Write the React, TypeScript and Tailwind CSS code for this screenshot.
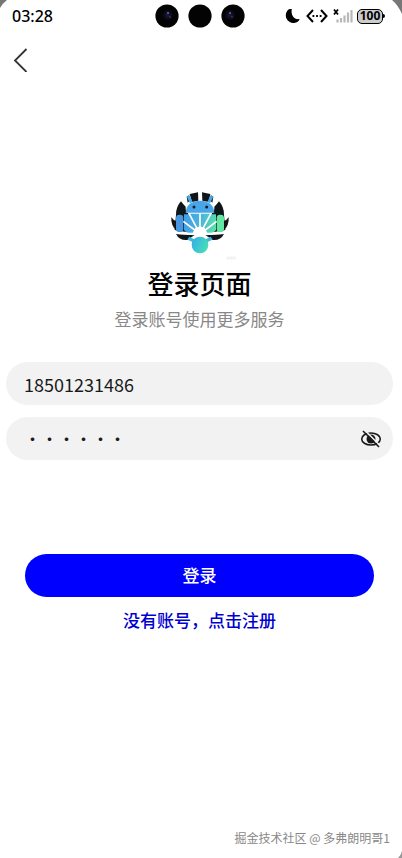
import { useState } from 'react';

function StatusBar() {
  return (
    <header className="relative flex h-8 items-center justify-between pr-[17px] pl-3">
      <span className="text-base font-medium text-black">03:28</span>
      <div className="absolute inset-x-0 top-1 flex justify-center gap-[9px] pr-0.5">
        <Camera lens="left" />
        <Camera />
        <Camera lens="right" />
      </div>
      <div className="flex items-center gap-1">
        <svg className="h-4 w-4" viewBox="0 0 16 16" aria-hidden="true">
          <path d="M4.500 1A7.300 7.300 0 1 0 14.600 11.200C8 13 3 7.500 4.500 1Z" fill="#000" />
          <path d="M4.500 1C1 3 0 7 1.500 10.500S7 15.500 10 14.800 14 12.500 14.600 11.200C10 12.200 5.500 8 6.800 1Z" fill="#000" />
        </svg>
        <svg className="h-4 w-6" viewBox="0 0 24 16" fill="none" stroke="#000" strokeWidth="2" aria-hidden="true">
          <path d="M8 2 2.500 8 8 14M16 2 21.500 8 16 14" />
          <path d="M7.500 8h1.800M11.100 8h1.800M14.700 8h1.800" strokeWidth="1.8" />
        </svg>
        <svg className="h-4 w-5" viewBox="0 0 20 16" aria-hidden="true">
          <path d="M1 1.500 5 6.500M5 1.500 1 6.500" stroke="#000" strokeWidth="1.8" />
          <path d="M4.500 11.500V14.500M8 10v4.500M11.500 7.500v7M15 4.500v10M18.500 2v12.500" stroke="#b8b8b8" strokeWidth="2.2" />
        </svg>
        <div className="flex items-center">
          <span className="flex h-[15px] w-[26px] items-center justify-center rounded-[5px] border border-black bg-[#ccc] text-xs font-bold text-black">
            100
          </span>
          <span className="h-1 w-0.5 rounded-r-full bg-black" />
        </div>
      </div>
    </header>
  );
}

function Camera({ lens }: { lens?: 'left' | 'right' }) {
  return (
    <svg className="h-6 w-6" viewBox="0 0 24 24" aria-hidden="true">
      <circle cx="12" cy="12" r="11.6" fill="#030303" />
      {lens && (
        <g transform={lens === 'left' ? 'translate(13 10)' : 'translate(9 10)'}>
          <circle cx="0" cy="1" r="5" fill="#0a0a18" />
          <circle cx="0" cy="1" r="2.6" fill="#15153a" />
          <circle cx="0" cy="-1" r="0.9" fill="#7777a5" />
          <circle cx="2" cy="3" r="0.8" fill="#4b4b68" />
        </g>
      )}
    </svg>
  );
}

function ScreenCorners() {
  return (
    <div className="pointer-events-none absolute inset-0 z-10 flex flex-col justify-between" aria-hidden="true">
      <div className="flex justify-between">
        <svg className="h-4 w-4" viewBox="0 0 16 16">
          <path d="M0 0h7Q3 3 0 8Z" fill="#777" />
        </svg>
        <svg className="h-4 w-4" viewBox="0 0 16 16">
          <path d="M6 0h10v14Q12 5 6 0Z" fill="#777" />
        </svg>
      </div>
      <svg className="h-2 w-2 self-end" viewBox="0 0 8 8">
        <path d="M8 1v7H4Q7 5 8 1Z" fill="#999" />
      </svg>
    </div>
  );
}

function Logo() {
  return (
    <svg className="h-[78px] w-[76px]" viewBox="20 30 228 234" role="img" aria-label="logo">
      <defs>
        <linearGradient id="robot" x1="80" y1="120" x2="188" y2="140" gradientUnits="userSpaceOnUse">
          <stop offset="0" stopColor="#3f9ce6" />
          <stop offset="0.5" stopColor="#4bb4dd" />
          <stop offset="1" stopColor="#5ce6a0" />
        </linearGradient>
        <linearGradient id="ball" x1="112" y1="185" x2="158" y2="205" gradientUnits="userSpaceOnUse">
          <stop offset="0" stopColor="#35b3e4" />
          <stop offset="1" stopColor="#48e0b4" />
        </linearGradient>
      </defs>
      <g fill="#10151a">
        <path d="M103 42 128 37 129 62 110 66ZM140 37 165 42 160 66 141 62Z" />
        <path d="M94 50 101 46 105 60 97 68ZM174 50 167 46 163 60 171 68Z" />
        <path d="M77 64Q62 80 62 104L58 150 92 156 98 104Q90 96 91 80Q84 74 77 64Z" />
        <path d="M191 64Q206 80 206 104L210 150 176 156 170 104Q178 96 177 80Q184 74 191 64Z" />
        <path d="M48 112Q46 138 64 152L64 124Q55 122 48 112ZM220 112Q222 138 204 152L204 124Q213 122 220 112Z" />
        <path d="M62 162 118 165 96 180Q72 182 62 162ZM206 162 150 165 172 180Q196 182 206 162Z" />
      </g>
      <path d="m98 48 10 20M170 48l-10 20" stroke="#48a9ea" strokeWidth="9" />
      <path d="M91 98Q93 64 134 62Q175 64 177 98Z" fill="#48a5e8" />
      <circle cx="116" cy="81" r="4.500" fill="#14202c" />
      <circle cx="154" cy="81" r="4.500" fill="#14202c" />
      <path d="M86 101H182V150Q174 164 134 164T86 150Z" fill="url(#robot)" />
      <path d="M86 101h12M170 101h12" stroke="#10151a" strokeWidth="4" />
      <rect x="62" y="104" width="22" height="52" rx="10" fill="#4796e0" />
      <rect x="184" y="104" width="22" height="52" rx="10" fill="#60e8a4" />
      <path
        d="M134 162V100M134 162 101 100M134 162 167 100M134 162 84 124M134 162 184 124"
        stroke="#fff"
        strokeWidth="5"
      />
      <path d="M60 157 112 158 120 144 134 139 148 144 156 158 208 157V162L150 166 134 174 118 166 60 162Z" fill="#fff" />
      <path d="m99 175 25 12M169 175l-25 12" stroke="#41b8dc" strokeWidth="10" />
      <circle cx="134" cy="195" r="25" fill="url(#ball)" />
      <path d="M215 231h6v6h-6ZM224 231h6v6h-6ZM233 231h7v6h-7Z" fill="none" stroke="#e8e8e8" strokeWidth="2" />
    </svg>
  );
}

function EyeIcon({ off }: { off: boolean }) {
  return (
    <svg className="h-5 w-6" viewBox="0 0 24 20" fill="none" stroke="#1a1a1a" strokeWidth="1.6" aria-hidden="true">
      <ellipse cx="12" cy="10" rx="9.300" ry="6" />
      <circle cx="12" cy="10" r="4.500" fill="#1a1a1a" stroke="none" />
      {off && (
        <>
          <path d="m5.500 1 16 16" stroke="#f2f2f2" strokeWidth="1.6" />
          <path d="m4 2 16 16" />
        </>
      )}
    </svg>
  );
}

export default function App() {
  const [account, setAccount] = useState('18501231486');
  const [password, setPassword] = useState('123456');
  const [hidden, setHidden] = useState(true);

  return (
    <div className="relative flex min-h-screen flex-col bg-white font-['Noto_Sans','Noto_Sans_CJK_SC',sans-serif]">
      <ScreenCorners />
      <StatusBar />
      <nav className="flex h-14 items-center pl-3">
        <button type="button" aria-label="返回">
          <svg className="h-6 w-4" viewBox="0 0 16 24" fill="none" stroke="#333" strokeWidth="1.8" aria-hidden="true">
            <path d="M14.500 1 3 12.500 14.500 24" />
          </svg>
        </button>
      </nav>

      <main className="flex flex-1 flex-col pt-[102px] pr-[9px] pl-1.5">
        <div className="flex flex-col items-center">
          <Logo />
          <h1 className="-mt-1 text-[26px] leading-10 font-medium text-black">登录页面</h1>
          <p className="mt-1 text-[17px] leading-6 text-[#888]">登录账号使用更多服务</p>
        </div>

        <form className="mt-[30px] flex flex-col" onSubmit={(e) => e.preventDefault()}>
          <input
            type="tel"
            aria-label="账号"
            value={account}
            onChange={(e) => setAccount(e.target.value)}
            className="h-[43px] w-full rounded-full bg-[#f2f2f2] px-[18px] font-['Noto_Sans_CJK_SC',sans-serif] text-lg text-[#1a1a1a] outline-none"
          />
          <div className="mt-3 flex h-[43px] items-center rounded-full bg-[#f2f2f2] pr-2.5 pl-[18px]">
            <input
              type={hidden ? 'password' : 'text'}
              aria-label="密码"
              value={password}
              onChange={(e) => setPassword(e.target.value)}
              className="min-w-0 flex-1 bg-transparent font-['Noto_Sans_CJK_SC',sans-serif] text-[17px] text-[#1a1a1a] outline-none"
            />
            <button type="button" aria-label="显示密码" onClick={() => setHidden(!hidden)}>
              <EyeIcon off={hidden} />
            </button>
          </div>
          <button
            type="submit"
            className="mx-[19px] mt-[94px] h-[43px] rounded-full bg-[#0000ff] text-[17px] font-medium text-white"
          >
            登录
          </button>
        </form>
        <a href="#register" className="mt-3 self-center text-[17px] leading-6 font-medium text-[#0000d0]">
          没有账号，点击注册
        </a>
      </main>

      <footer className="px-3 pb-2 text-right font-['Noto_Sans_CJK_SC',sans-serif] text-xs leading-6 text-[#888]">
        掘金技术社区 @ 多弗朗明哥1
      </footer>
    </div>
  );
}
